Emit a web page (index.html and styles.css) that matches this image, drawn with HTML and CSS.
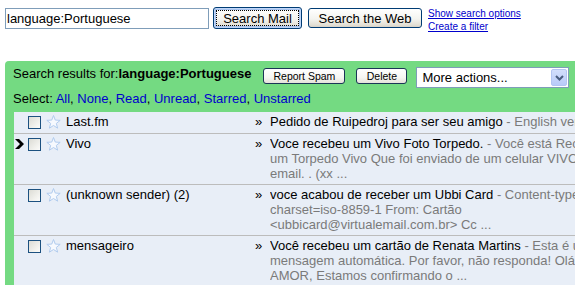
FILE: index.html
```html
<!DOCTYPE html>
<html>
<head>
<meta charset="utf-8">
<link rel="stylesheet" href="styles.css">
</head>
<body>
<div class="top">
  <input class="q" type="text" value="language:Portuguese">
  <button class="btn btn-mail"><span>Search Mail</span></button>
  <button class="btn btn-web">Search the Web</button>
  <div class="links">
    <a href="#">Show search options</a>
    <a href="#">Create a filter</a>
  </div>
</div>
<div class="results">
  <div class="bar">
    <span class="label">Search results for:<b>language:Portuguese</b></span>
    <button class="sbtn sbtn-spam">Report Spam</button>
    <button class="sbtn sbtn-del">Delete</button>
    <div class="sel">
      <span>More actions...</span>
      <span class="sel-arrow"><svg width="9" height="6" viewBox="0 0 9 6"><polyline points="1,1 4.5,4.5 8,1" fill="none" stroke="#4a5d80" stroke-width="2"/></svg></span>
    </div>
  </div>
  <div class="selrow">Select: <a href="#">All</a>, <a href="#">None</a>, <a href="#">Read</a>, <a href="#">Unread</a>, <a href="#">Starred</a>, <a href="#">Unstarred</a></div>
  <div class="list">
    <div class="row">
      <span class="cur"></span>
      <span class="cb"></span>
      <svg class="star" width="15" height="15" viewBox="0 0 15 15"><polygon points="7.5,0.5 9.26,5.07 14.16,5.34 10.35,8.43 11.61,13.16 7.5,10.5 3.39,13.16 4.65,8.43 0.84,5.34 5.74,5.07"/></svg>
      <span class="from">Last.fm</span>
      <span class="raq">»</span>
      <span class="subj">Pedido de Ruipedroj para ser seu amigo <span class="snip">- English version follows ...</span></span>
    </div>
    <div class="row">
      <span class="cur"><svg width="9" height="10" viewBox="0 0 9 10"><polygon points="0,0 4,0 9,5 4,10 0,10 5,5" fill="#000"/></svg></span>
      <span class="cb"></span>
      <svg class="star" width="15" height="15" viewBox="0 0 15 15"><polygon points="7.5,0.5 9.26,5.07 14.16,5.34 10.35,8.43 11.61,13.16 7.5,10.5 3.39,13.16 4.65,8.43 0.84,5.34 5.74,5.07"/></svg>
      <span class="from">Vivo</span>
      <span class="raq">»</span>
      <span class="subj">Voce recebeu um Vivo Foto Torpedo. <span class="snip">- Você está Recebendo<br>um Torpedo Vivo Que foi enviado de um celular VIVO para<br>email. . (xx ...</span></span>
    </div>
    <div class="row">
      <span class="cur"></span>
      <span class="cb"></span>
      <svg class="star" width="15" height="15" viewBox="0 0 15 15"><polygon points="7.5,0.5 9.26,5.07 14.16,5.34 10.35,8.43 11.61,13.16 7.5,10.5 3.39,13.16 4.65,8.43 0.84,5.34 5.74,5.07"/></svg>
      <span class="from">(unknown sender) (2)</span>
      <span class="raq">»</span>
      <span class="subj">voce acabou de receber um Ubbi Card <span class="snip">- Content-type: text/html;<br>charset=iso-8859-1 From: Cartão<br>&lt;ubbicard@virtualemail.com.br&gt; Cc ...</span></span>
    </div>
    <div class="row">
      <span class="cur"></span>
      <span class="cb"></span>
      <svg class="star" width="15" height="15" viewBox="0 0 15 15"><polygon points="7.5,0.5 9.26,5.07 14.16,5.34 10.35,8.43 11.61,13.16 7.5,10.5 3.39,13.16 4.65,8.43 0.84,5.34 5.74,5.07"/></svg>
      <span class="from">mensageiro</span>
      <span class="raq">»</span>
      <span class="subj">Você recebeu um cartão de Renata Martins <span class="snip">- Esta é uma<br>mensagem automática. Por favor, não responda! Olá<br>AMOR, Estamos confirmando o ...</span></span>
    </div>
  </div>
</div>
</body>
</html>
```
FILE: styles.css
```css
html, body {
  margin: 0;
  padding: 0;
  overflow: hidden;
  background: #fff;
}
body {
  font-family: "Liberation Sans", Arial, sans-serif;
  font-size: 13px;
  color: #000;
}
.top {
  display: flex;
  align-items: flex-start;
  padding: 7px 0 0 5px;
  height: 26px;
}
.q {
  width: 204px;
  height: 21px;
  box-sizing: border-box;
  margin: 1px 0 0 0;
  border: 1px solid #7f9db9;
  padding: 0 1px;
  font: 13px "Liberation Sans", Arial, sans-serif;
  color: #000;
  outline: none;
}
.btn {
  box-sizing: border-box;
  font: 13px "Liberation Sans", Arial, sans-serif;
  color: #000;
  border: 1px solid #003c74;
  border-radius: 3px;
  background: linear-gradient(#ffffff, #f4f4f0 55%, #e2ded3 90%, #d6d0c5);
  padding: 0;
}
.btn-mail {
  width: 89px;
  height: 22px;
  margin-left: 4px;
  box-shadow: inset 0 0 0 1px #c0d6f8, inset 0 0 0 2px #a8c3ee;
  outline: 1px dotted #000;
  outline-offset: -4px;
}
.btn-web {
  width: 114px;
  height: 20px;
  margin: 1px 0 0 6px;
}
.links {
  margin-left: 6px;
  font-size: 10px;
  line-height: 13px;
}
.links a {
  display: block;
  color: #0000cc;
  text-decoration: underline;
}
.results {
  margin: 28px 0 0 5px;
  width: 640px;
  background: #74da82;
  border-radius: 4px 4px 0 0;
  padding-bottom: 60px;
}
.bar {
  display: flex;
  align-items: flex-start;
  box-sizing: border-box;
  height: 30px;
  padding: 5px 0 0 8px;
}
.label {
  line-height: 15px;
  margin-right: 12px;
}
.sbtn {
  box-sizing: border-box;
  height: 16px;
  margin-top: 2px;
  padding: 0;
  font: 10.5px "Liberation Sans", Arial, sans-serif;
  color: #000;
  border: 1px solid #1a3556;
  border-radius: 3px;
  background: linear-gradient(#ffffff, #f6f6f2 60%, #e4e2da);
}
.sbtn-spam { width: 82px; }
.sbtn-del { width: 51px; margin-left: 11px; }
.sel {
  box-sizing: border-box;
  width: 153px;
  height: 21px;
  margin: 1px 0 0 9px;
  border: 1px solid #7f9db9;
  background: #fff;
  display: flex;
  align-items: center;
  justify-content: space-between;
  padding-left: 5px;
}
.sel-arrow {
  box-sizing: border-box;
  width: 16px;
  height: 17px;
  margin-right: 1px;
  background: linear-gradient(#d2defc, #b9cbf9);
  border: 1px solid #b3c5f3;
  border-radius: 2px;
  display: flex;
  align-items: center;
  justify-content: center;
}
.selrow {
  padding: 0 0 5px 8px;
  line-height: 16px;
}
.selrow a {
  color: #0000cc;
  text-decoration: none;
}
.list {
  margin-left: 9px;
  background: #e8eef7;
}
.row {
  display: grid;
  grid-template-columns: 14px 18px 20px 189px 15px 1fr;
  align-items: start;
  padding: 2px 0 3px;
  border-bottom: 1px solid #bcbcbc;
  line-height: 15px;
  min-height: 16px;
}
.cur {
  display: block;
  height: 16px;
}
.cur svg {
  display: block;
  margin: 3px 0 0 1px;
}
.cb {
  display: block;
  box-sizing: border-box;
  width: 13px;
  height: 13px;
  margin-top: 2px;
  border: 1px solid #1c5180;
  background: linear-gradient(135deg, #dcdcd5, #f3f3ef 70%, #fbfbfa);
}
.star {
  display: block;
  margin-top: 1px;
}
.star polygon {
  fill: #f6f9fe;
  stroke: #b0cbee;
  stroke-width: 1;
}
.from {
  white-space: nowrap;
  overflow: hidden;
}
.raq {
  font-size: 13px;
}
.subj {
  white-space: nowrap;
  overflow: hidden;
  min-height: 16px;
}
.snip {
  color: #7a7a7a;
}
```
